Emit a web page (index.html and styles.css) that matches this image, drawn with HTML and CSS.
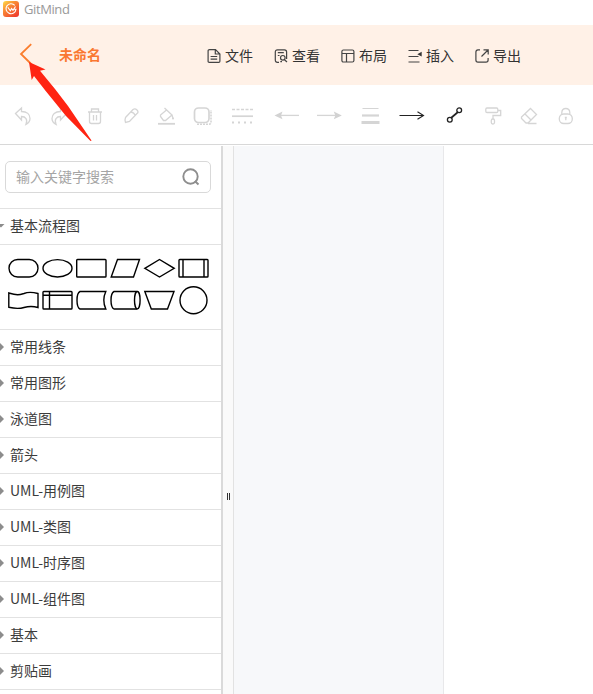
FILE: index.html
```html
<!DOCTYPE html>
<html lang="zh-CN">
<head>
    <meta charset="UTF-8">
    <meta name="viewport" content="width=device-width, initial-scale=1.0">
    <title>GitMind</title>
    <link rel="stylesheet" href="styles.css">
</head>
<body>
    <div class="titlebar">
        <svg class="logo" width="16" height="16" viewBox="0 0 16 16">
            <defs>
                <linearGradient id="logoFill" x1="0" y1="0" x2=".8" y2="1">
                    <stop offset="0" stop-color="#ffe04a"/>
                    <stop offset=".4" stop-color="#f98b35"/>
                    <stop offset="1" stop-color="#ef3c2d"/>
                </linearGradient>
            </defs>
            <rect width="16" height="16" rx="3" fill="url(#logoFill)"/>
            <path d="M11.800 4.400A5 5 0 1 0 13 8.300H11M4.800 6.300L7.300 9.800L8.600 7.500L10 9.300L12.500 5.500" fill="none" stroke="#fff" stroke-width="1.100"/>
        </svg>
        <span>GitMind</span>
    </div>

    <header class="header">
        <svg class="back" width="14" height="22" viewBox="0 0 14 22"><path d="M12.200 1.200L2 11L12.200 21"/></svg>
        <h1 class="doc-name">未命名</h1>
        <nav class="menu">
            <a class="menu-item">
                <svg width="14" height="14" viewBox="0 0 14 14"><path d="M2.500 .6H8.500L12.900 5V12.200Q12.900 13.400 11.700 13.400H2.300Q1.100 13.400 1.100 12.200V1.800Q1.100 .6 2.500 .6ZM8.300 .8V5H12.700M3.600 7.500H10.200M3.600 10.200H10.200"/></svg>
                <span>文件</span>
            </a>
            <a class="menu-item">
                <svg width="14" height="14" viewBox="0 0 14 14"><path d="M5 13.300H3.500Q1.300 13.300 1.300 11V3Q1.300 .8 3.500 .8H10.500Q12.600 .8 12.600 3V10M3.800 3.700H9.800M3.800 6.500H5.500"/><circle cx="8.800" cy="8.800" r="2.300"/><path d="M6.300 12.700H8M10.500 10.700L13 13"/></svg>
                <span>查看</span>
            </a>
            <a class="menu-item">
                <svg width="14" height="14" viewBox="0 0 14 14"><rect x=".9" y="1" width="12" height="12" rx="1.500"/><path d="M1 4.500H13M5.500 4.500V13"/></svg>
                <span>布局</span>
            </a>
            <a class="menu-item">
                <svg width="14" height="14" viewBox="0 0 14 14"><path d="M.5 1.500H10.500M.5 7.500H10.500M.5 13H11.500"/><path class="solid" d="M9.300 5.200L13.700 2.800V7.600Z"/></svg>
                <span>插入</span>
            </a>
            <a class="menu-item">
                <svg width="14" height="14" viewBox="0 0 14 14"><path d="M5 .8H3Q.9 .8 .9 3V11Q.9 13.200 3 13.200H11Q13.100 13.200 13.100 11V9M8.500 .8H13.200V5.500M13 1L6.500 7.500"/></svg>
                <span>导出</span>
            </a>
        </nav>
    </header>

    <div class="toolbar">
        <svg width="24" height="24" viewBox="0 0 24 24"><path d="M4.500 9.500L10.500 4V7.500C16 7.500 19 10.500 19 14.500C19 17 17.500 19 15 20.300C17 15.500 14.500 12.500 10.500 12.500V16Z"/></svg>
        <svg width="24" height="24" viewBox="0 0 24 24"><path d="M19.500 9.500L13.500 4V7.500C8 7.500 5 10.500 5 14.500C5 17 6.500 19 9 20.300C7 15.500 9.500 12.500 13.500 12.500V16Z"/></svg>
        <svg width="24" height="24" viewBox="0 0 24 24"><path d="M5 8H19M8.500 8V5H15.500V8M6.500 8V17.500Q6.500 19.500 8.500 19.500H15.500Q17.500 19.500 17.500 17.500V8M10.500 11V16.500M13.500 11V16.500"/></svg>
        <svg width="24" height="24" viewBox="0 0 24 24"><path d="M6.500 13.500L14 5.500Q16 4 18 6T18 9.500L10.500 17.500L6.500 18.500Q5.500 16 6.500 13.500ZM12 8Q15.500 8.500 16 12"/></svg>
        <svg width="24" height="24" viewBox="0 0 24 24"><path d="M9.500 4L17 11L10.500 16.500H8.500L5.500 12.500V11L11.500 6M17 11Q17.500 13 18 14"/><path d="M3 19.800H20" stroke-width="1.800"/><circle class="solid" cx="18" cy="14.500" r="1"/></svg>
        <svg width="24" height="24" viewBox="0 0 24 24"><rect x="3.500" y="4" width="14.500" height="14.500" rx="4" stroke-width="1.700"/><path d="M6 20.300H18Q20 20.300 20 18V6" stroke-dasharray="2 1" stroke-width="1.600"/></svg>
        <svg width="30" height="24" viewBox="0 0 30 24"><path d="M5 5.500H26" stroke-dasharray="3 1.500"/><path d="M5 12.200H26" stroke-width="1.700"/><path d="M5 18.500H26" stroke-dasharray="2 4" stroke-width="1.800"/></svg>
        <svg class="arrow-start" width="30" height="24" viewBox="0 0 30 24"><path d="M8 11.400H27"/><path class="solid" d="M2.500 11.400L10.500 7.500L9 11.400L10.500 15.300Z"/></svg>
        <svg width="30" height="24" viewBox="0 0 30 24"><path d="M3 11.400H23"/><path class="solid" d="M27.800 11.400L19.800 7.500L21.300 11.400L19.800 15.300Z"/></svg>
        <svg width="30" height="24" viewBox="0 0 30 24"><path d="M6.500 4.500H22.500" stroke-width="1"/><path d="M6 11.500H23" stroke-width="2.200"/><path d="M5.500 18.500H23.500" stroke-width="3"/></svg>
        <svg class="active" width="30" height="24" viewBox="0 0 30 24"><path d="M1.500 11.500H25M19.500 7.800L25.500 11.500L19.500 15.200" stroke-width="1.100"/></svg>
        <svg class="active connector" width="24" height="24" viewBox="0 0 24 24"><path d="M9 14L16 8" stroke-width="1.700"/><circle cx="7.800" cy="15.800" r="2.400"/><circle cx="17.200" cy="6.300" r="2.400"/></svg>
        <svg class="painter" width="24" height="24" viewBox="0 0 24 24"><rect x="4.800" y="4" width="12" height="4.500" rx="1.200"/><path d="M17 6.500H19.700V11.500H12V15"/><rect x="10.300" y="15" width="3.200" height="5" rx="1.500"/></svg>
        <svg width="24" height="24" viewBox="0 0 24 24"><path d="M13.500 4.500L19.500 10.500L11 19H9L4.500 14.500V13ZM8 10L14 16M11 19.500H19.500"/></svg>
        <svg class="lock" width="24" height="24" viewBox="0 0 24 24"><rect x="6.300" y="10" width="13" height="9.500" rx="4.500"/><path d="M8.800 10V8.500Q9 4.500 12.800 4.500T16.800 8.500V10M12.800 13V16.200M11.800 13.500H13.800"/></svg>
    </div>

    <main class="workspace">
        <aside class="sidebar">
            <div class="search">
                <span>输入关键字搜索</span>
                <svg width="18" height="18" viewBox="0 0 18 18"><circle cx="8.500" cy="8.500" r="7.200"/><path d="M12.800 13L16.500 16.500"/></svg>
            </div>

            <div class="group open">基本流程图</div>
            <div class="shapes">
                <svg viewBox="0 0 34 32"><rect x="2" y="7.500" width="29" height="17.500" rx="8.700"/></svg>
                <svg viewBox="0 0 34 32"><ellipse cx="16.500" cy="16.300" rx="14.500" ry="8.700"/></svg>
                <svg viewBox="0 0 34 32"><rect x="1.700" y="7.500" width="29.300" height="17.500" rx=".8"/></svg>
                <svg viewBox="0 0 34 32"><path d="M8.500 7.500H30.500L24.500 25H2.200Z"/></svg>
                <svg viewBox="0 0 34 32"><path d="M1.800 16.300L16.500 7.500L31.200 16.300L16.500 25Z"/></svg>
                <svg viewBox="0 0 34 32"><rect x="2" y="7.500" width="29" height="17.500" rx=".8"/><path d="M6 7.500V25M27 7.500V25"/></svg>
                <svg viewBox="0 0 34 32"><path d="M1.800 9C10 11.500 12 11 17 9.500C22 7.500 27 8.500 31 9.500V23.500C26 22 22 22 17 23.500C12 25 7 24.500 1.800 23.300Z"/></svg>
                <svg viewBox="0 0 34 32"><rect x="2" y="7.500" width="29" height="17.500" rx=".8"/><path d="M2 11.300H31M8.500 7.500V25"/></svg>
                <svg viewBox="0 0 34 32"><path d="M5 7.500H30.800Q26.800 16.200 30.800 25H5Q2 23.500 2 16.200T5 7.500Z"/></svg>
                <svg viewBox="0 0 34 32"><path d="M28.300 7.500H5Q2 9 2 16.200T5 25H28.300"/><ellipse cx="28.300" cy="16.200" rx="2.800" ry="8.700"/></svg>
                <svg viewBox="0 0 34 32"><path d="M1.800 7.500H31L24.500 25H8.300Z"/></svg>
                <svg viewBox="0 0 34 32"><circle cx="16.500" cy="16.300" r="13.500"/></svg>
            </div>

            <div class="group">常用线条</div>
            <div class="group">常用图形</div>
            <div class="group">泳道图</div>
            <div class="group">箭头</div>
            <div class="group">UML-用例图</div>
            <div class="group">UML-类图</div>
            <div class="group">UML-时序图</div>
            <div class="group">UML-组件图</div>
            <div class="group">基本</div>
            <div class="group">剪贴画</div>
        </aside>
        <div class="splitter"><i class="grip"></i></div>
        <div class="canvas"></div>
        <div class="page"></div>
    </main>

    <!-- pointer to the back button -->
    <svg class="pointer" width="66" height="82" viewBox="0 0 66 82"><path d="M3 2L19.500 9.500L14 10.700L29 29L42 46L65.500 80.500Q65 81.500 63.500 80L40 56L19.700 31L8 16L5.700 20Z"/></svg>
</body>
</html>
```

FILE: styles.css
```css
* {
    margin: 0;
    padding: 0;
    box-sizing: border-box;
}

body {
    height: 100vh;
    display: flex;
    flex-direction: column;
    overflow: hidden;
    position: relative;
    background-color: #fff;
    color: #333;
    font-family: 'Noto Sans CJK SC', sans-serif;
    font-size: 14px;
}

svg {
    display: block;
    flex-shrink: 0;
    fill: none;
}

.titlebar {
    height: 25px;
    padding: 1px 3px 0;
    display: flex;
    align-items: flex-start;
    gap: 5px;
    color: #999;
    font-family: 'Open Sans', sans-serif;
    font-size: 13px;
    letter-spacing: -0.4px;
    line-height: 17px;
}

.header {
    height: 60px;
    flex-shrink: 0;
    display: flex;
    align-items: center;
    padding: 0 19px;
    background-color: #fff1e7;
}

.back {
    margin-top: -3px;
    stroke: #fa7d2d;
    stroke-width: 1.8;
}

.doc-name {
    width: 148px;
    margin-left: 26px;
    padding-bottom: 2px;
    color: #fa7832;
    font-size: 14px;
    font-weight: bold;
}

.menu {
    display: flex;
    gap: 21px;
}

.menu-item {
    display: flex;
    align-items: center;
    gap: 4px;
    white-space: nowrap;
}

.menu-item svg {
    margin-top: 1px;
    stroke: #444;
    stroke-width: 1.2;
}

.menu-item .solid {
    fill: #333;
    stroke: none;
}

.toolbar {
    height: 60px;
    flex-shrink: 0;
    display: flex;
    align-items: center;
    gap: 12px;
    padding: 2px 0 0 11px;
    border-bottom: 1px solid #d8d8d8;
}

.toolbar svg {
    stroke: #d5d5d5;
    stroke-width: 1.3;
}

.toolbar .solid {
    fill: #d2d2d2;
    stroke: none;
}

.toolbar .active {
    stroke: #222;
}

.arrow-start,
.painter {
    margin-left: 3px;
}

.connector {
    margin-left: 2px;
}

.workspace {
    flex: 1;
    min-height: 0;
    padding-top: 1px;
    display: flex;
}

.sidebar {
    width: 221px;
}

.search {
    height: 32px;
    margin: 15px 10px 15px 5px;
    padding: 0 10px;
    display: flex;
    align-items: center;
    justify-content: space-between;
    border: 1px solid #d9d9d9;
    border-radius: 5px;
    color: #a5a5a5;
}

.search span {
    padding-bottom: 2px;
}

.search svg {
    stroke: #8e8e8e;
    stroke-width: 1.9;
}

.group {
    height: 36px;
    padding-bottom: 3px;
    display: flex;
    align-items: center;
    border-top: 1px solid #e2e2e2;
    color: #3c3c3c;
}

.group::before {
    content: '';
    width: 4px;
    height: 8px;
    margin: 2px 6px 0 0;
    background-color: #8c8c8c;
    clip-path: polygon(0 0, 100% 50%, 0 100%);
}

.group.open::before {
    width: 5px;
    height: 4px;
    margin: 1px 5px 0 0;
    clip-path: polygon(0 0, 100% 0, 20% 100%, 0 80%);
}

.group:last-child {
    height: 37px;
    border-bottom: 1px solid #e2e2e2;
}

.shapes {
    height: 85px;
    padding: 7px 0 0 7px;
    display: grid;
    grid-template-columns: repeat(6, 34px);
    grid-auto-rows: 32px;
    border-top: 1px solid #e2e2e2;
}

.shapes svg {
    stroke: #000;
    stroke-width: 1.4;
}

.splitter {
    width: 13px;
    display: flex;
    align-items: center;
    justify-content: center;
    background-color: #fafafa;
    border-left: 2px solid #dadada;
    border-right: 1px solid #e2e2e2;
}

.grip {
    width: 3px;
    height: 7px;
    margin-top: 153px;
    border: solid #333;
    border-width: 0 1px;
}

.canvas {
    width: 210px;
    background-color: #f7f8fa;
    border-right: 1px solid #e8e8ea;
}

.page {
    flex: 1;
}

.pointer {
    position: absolute;
    left: 26px;
    top: 60px;
    fill: #ff2412;
}
```
